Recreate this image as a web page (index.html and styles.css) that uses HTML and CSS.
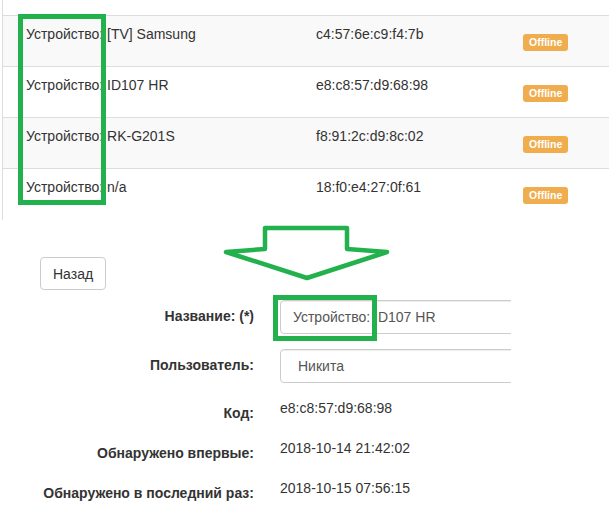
FILE: index.html
```html
<!DOCTYPE html>
<html lang="ru">
<head>
<meta charset="utf-8">
<title>Устройства</title>
<link rel="stylesheet" href="styles.css">
</head>
<body>
<div class="page">
  <div class="devices">
    <table class="table">
      <colgroup><col class="col-name"><col class="col-mac"><col></colgroup>
      <tr class="odd"><td class="c-name">Устройство: [TV] Samsung</td><td class="c-mac">c4:57:6e:c9:f4:7b</td><td class="c-st"><span class="label">Offline</span></td></tr>
      <tr><td class="c-name">Устройство: ID107 HR</td><td class="c-mac">e8:c8:57:d9:68:98</td><td class="c-st"><span class="label">Offline</span></td></tr>
      <tr class="odd"><td class="c-name">Устройство: RK-G201S</td><td class="c-mac">f8:91:2c:d9:8c:02</td><td class="c-st"><span class="label">Offline</span></td></tr>
      <tr><td class="c-name">Устройство: n/a</td><td class="c-mac">18:f0:e4:27:0f:61</td><td class="c-st"><span class="label">Offline</span></td></tr>
    </table>
  </div>

  <div class="detail">
    <button class="btn" type="button">Назад</button>
    <form class="form">
      <div class="frow frow-ctl">
        <label class="flabel">Название: (*)</label>
        <div class="clip"><input class="fcontrol" type="text" value="Устройство: ID107 HR"></div>
      </div>
      <div class="frow frow-ctl">
        <label class="flabel">Пользователь:</label>
        <div class="clip"><div class="fcontrol fselect">Никита</div></div>
      </div>
      <div class="frow frow-static">
        <label class="flabel">Код:</label>
        <div class="fstatic">e8:c8:57:d9:68:98</div>
      </div>
      <div class="frow frow-static">
        <label class="flabel">Обнаружено впервые:</label>
        <div class="fstatic">2018-10-14 21:42:02</div>
      </div>
      <div class="frow frow-static">
        <label class="flabel">Обнаружено в последний раз:</label>
        <div class="fstatic">2018-10-15 07:56:15</div>
      </div>
    </form>
  </div>

  <svg class="annot" width="609" height="506" viewBox="0 0 609 506" aria-hidden="true">
    <rect x="20.5" y="16.5" width="83" height="186" fill="none" stroke="#22b14c" stroke-width="5"/>
    <rect x="275.5" y="297.5" width="99" height="41" fill="none" stroke="#22b14c" stroke-width="5"/>
    <polygon points="265,228 347,228 347,249 387,252 307,278 226,252 265,249" fill="#fff" stroke="#22b14c" stroke-width="4.5" stroke-linejoin="round"/>
  </svg>
</div>
</body>
</html>
```

FILE: styles.css
```css
* { box-sizing: border-box; }
html, body { margin: 0; padding: 0; background: #fff; overflow: hidden; }
body {
  font-family: "Liberation Sans", Arial, Helvetica, sans-serif;
  font-size: 14px;
  line-height: 20px;
  color: #333;
}
.page { position: relative; width: 609px; height: 506px; }

.devices {
  margin-left: 2px;
  border-left: 1px solid #ddd;
  padding-top: 15px;
  height: 220px;
}
.table {
  width: 100%;
  border-collapse: collapse;
  table-layout: fixed;
}
.col-name { width: 305px; }
.col-mac { width: 207px; }
.table td {
  border-top: 1px solid #ddd;
  padding: 8px;
  vertical-align: top;
  white-space: nowrap;
}
.table tr.odd td { background: #f9f9f9; }
.table td.c-name { padding-left: 23px; }
.label {
  display: block;
  width: max-content;
  margin: 10px 0 7px;
  background: #f0ad4e;
  color: #fff;
  font-weight: bold;
  font-size: 10.5px;
  line-height: 11px;
  padding: 3px 6px;
  border-radius: 3px;
}

.detail { padding-top: 37px; }
.btn {
  display: block;
  margin-left: 40px;
  height: 33px;
  padding: 6px 12px;
  font: 14px/20px "Liberation Sans", Arial, sans-serif;
  color: #333;
  background: #fff;
  border: 1px solid #ccc;
  border-radius: 4px;
}
.form {
  margin-top: 10px;
  display: flex;
  flex-direction: column;
  gap: 15px;
}
.frow {
  display: grid;
  grid-template-columns: 254px 231px;
  column-gap: 26px;
}
.flabel {
  text-align: right;
  font-weight: bold;
  white-space: nowrap;
}
.frow-ctl { height: 34px; }
.frow-ctl .flabel { padding-top: 6px; }
.frow-static { height: 25px; }
.frow-static .flabel { padding-top: 5px; }
.clip { overflow: hidden; height: 34px; }
.fcontrol {
  display: block;
  width: 270px;
  height: 34px;
  padding: 6px 12px;
  font: 14px/20px "Liberation Sans", Arial, sans-serif;
  color: #555;
  background: #fff;
  border: 1px solid #ccc;
  border-radius: 4px;
  box-shadow: inset 0 1px 1px rgba(0,0,0,.075);
  outline: none;
}
.fselect { padding-left: 17px; }
.fstatic { color: #333; }

.annot { position: absolute; left: 0; top: 0; pointer-events: none; }
```
